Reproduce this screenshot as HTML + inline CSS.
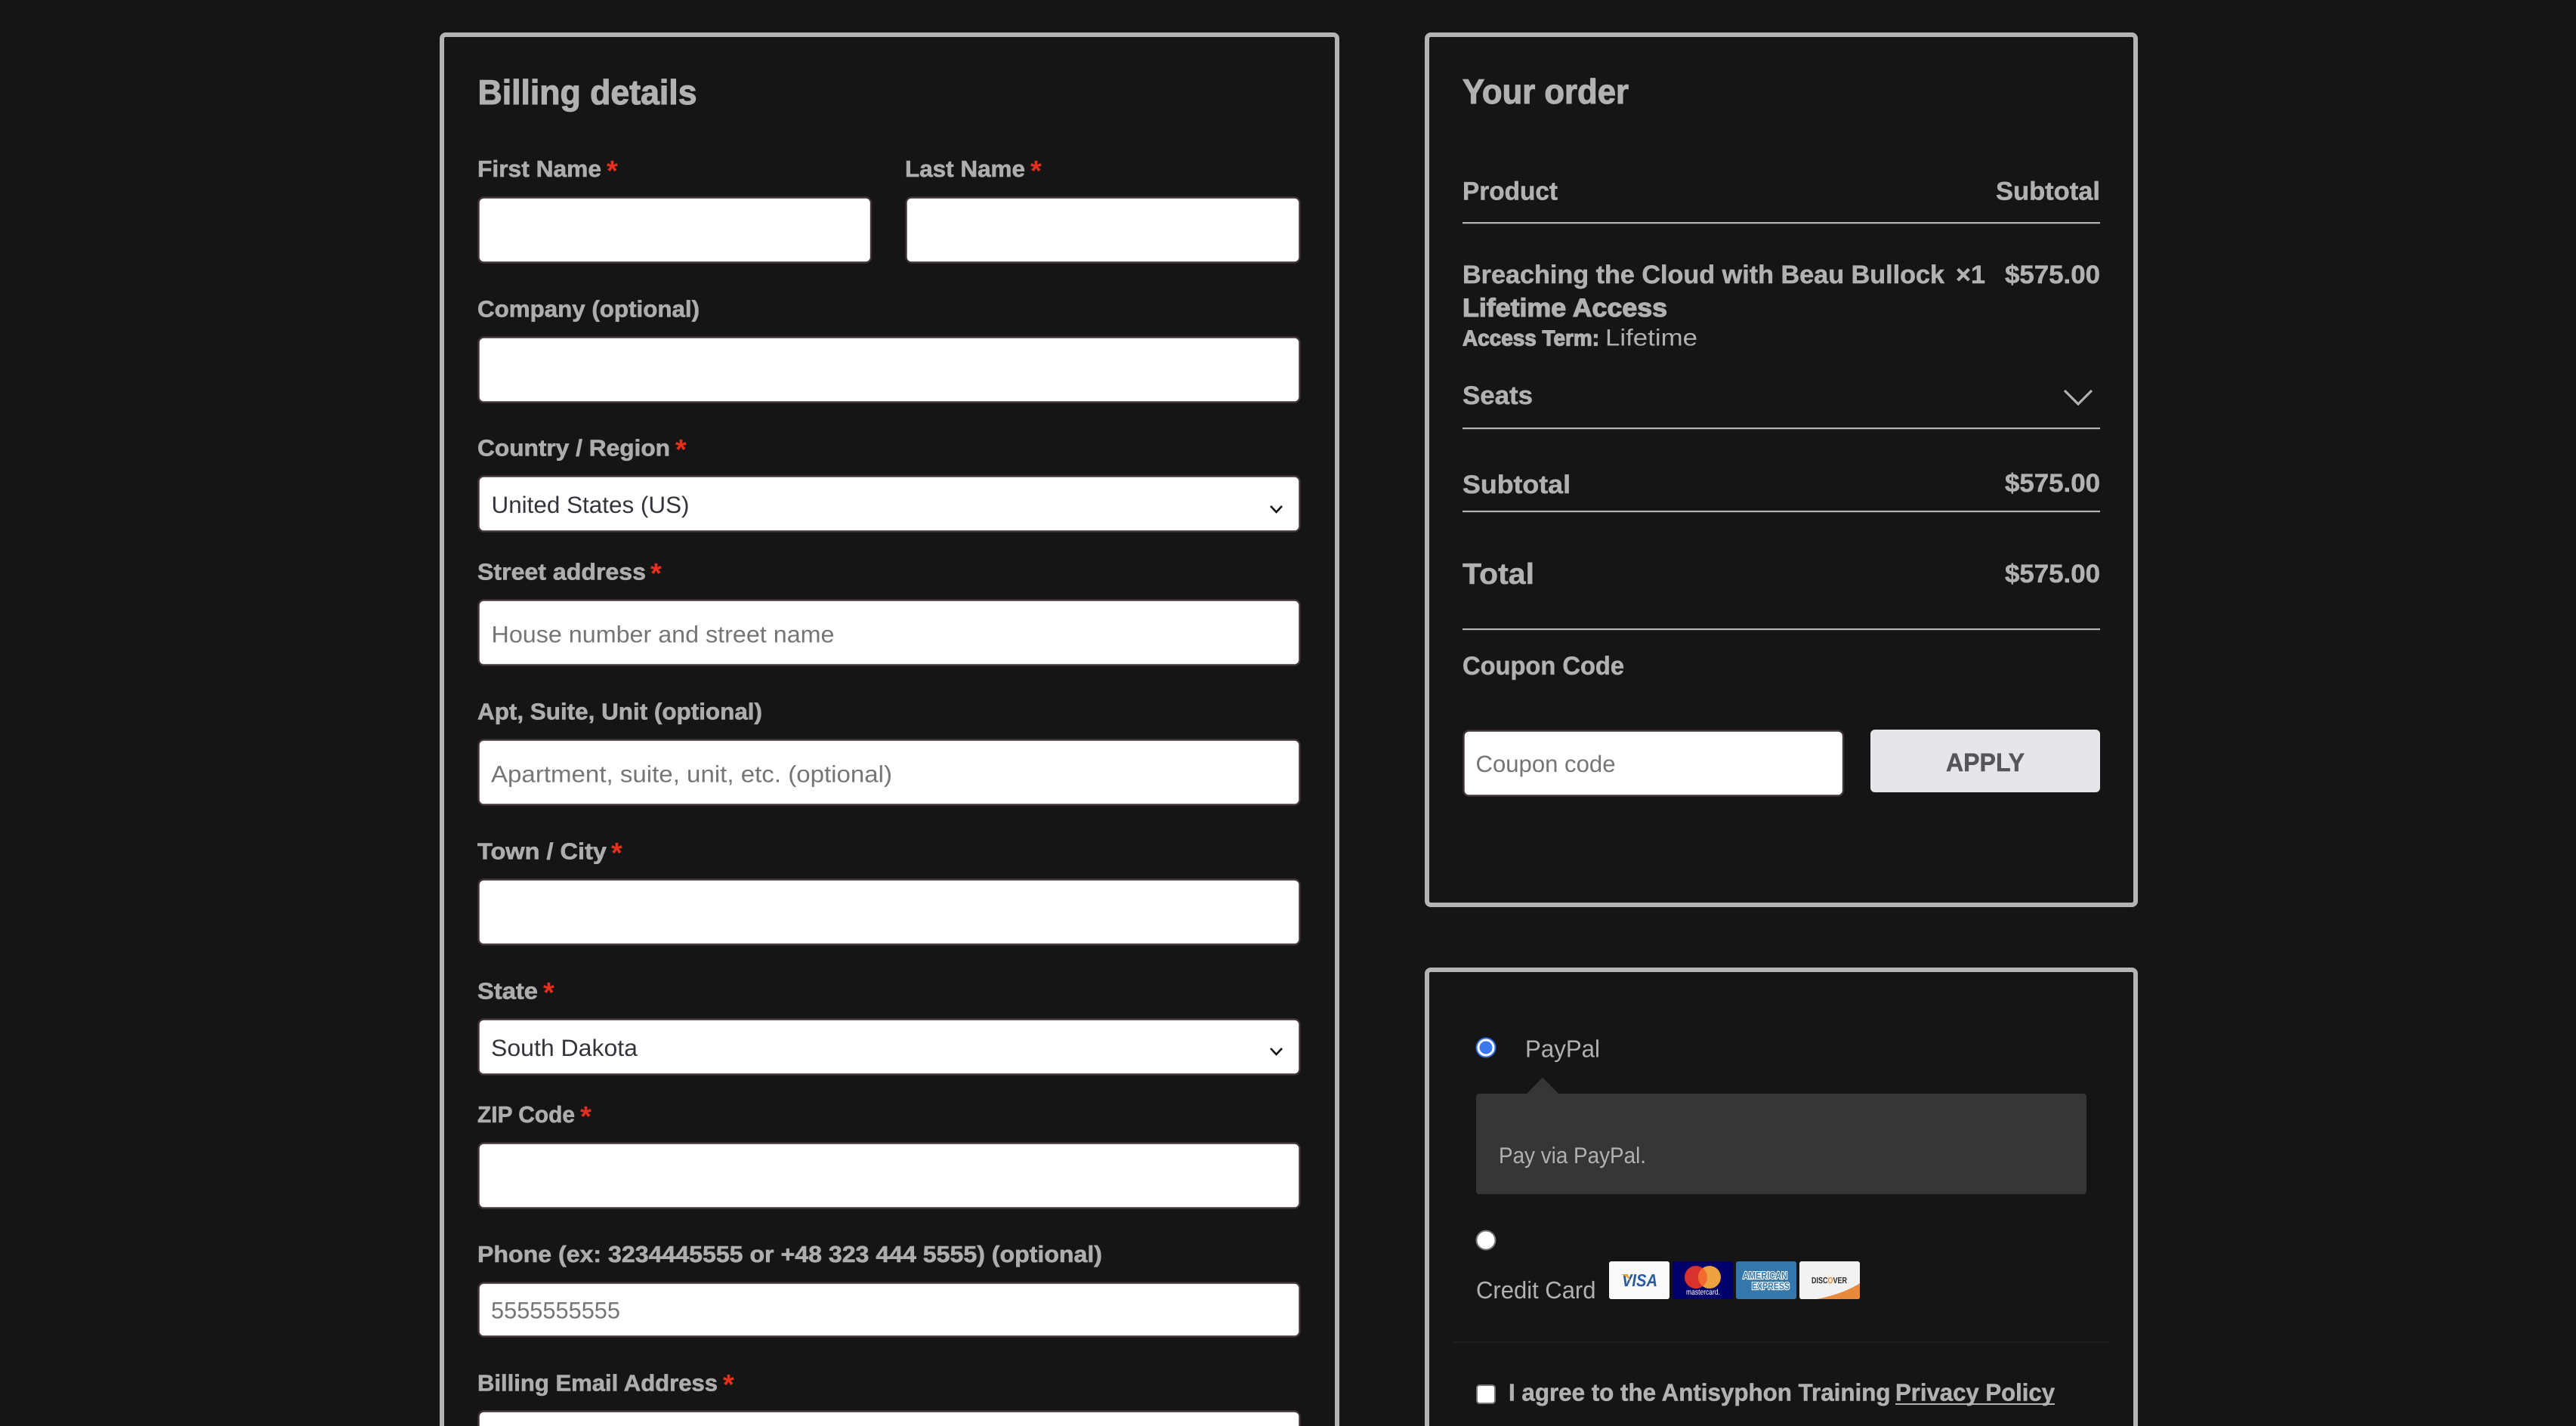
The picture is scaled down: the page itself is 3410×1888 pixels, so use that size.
<!DOCTYPE html>
<html lang="en">
<head>
<meta charset="utf-8">
<title>Checkout</title>
<style>
html,body{margin:0;padding:0;width:3410px;height:1888px;background:#151515;overflow:hidden}
svg{display:block;position:absolute;left:0;top:0}
text{font-family:"Liberation Sans",sans-serif;text-rendering:geometricPrecision;fill:#b1b1b1}
.t{font-weight:700;font-size:46px;stroke:#b1b1b1;stroke-width:1.1px}
.l{font-weight:700;font-size:30.5px;fill:#adadad;stroke:#adadad;stroke-width:.6px}
.b{font-weight:700;font-size:34px;stroke:#b1b1b1;stroke-width:.5px}
.n{font-size:32px}
.p{font-size:31px;fill:#757575}
.s{font-size:31px;fill:#33343a}
.a{font-weight:700;font-size:38px;fill:#e8301c}
.x{stroke:#b1b1b1;stroke-width:1.2px}
.card{fill:none;stroke:#b4b4b4;stroke-width:6}
.in{fill:#fff;stroke:#40363a;stroke-width:2.4}
</style>
</head>
<body>
<svg width="3410" height="1888" viewBox="0 0 3410 1888" xmlns="http://www.w3.org/2000/svg">
<rect width="3410" height="1888" fill="#151515"/>

<!-- Billing card -->
<path class="card" d="M585 1888 V51 a5 5 0 0 1 5 -5 H1765 a5 5 0 0 1 5 5 V1888"/>
<text class="t" x="632.5" y="138" textLength="290" lengthAdjust="spacingAndGlyphs">Billing details</text>

<text class="l" x="632" y="234" textLength="164" lengthAdjust="spacingAndGlyphs">First Name</text>
<text class="a" x="803" y="239">*</text>
<rect class="in" x="633.5" y="261.5" width="519.5" height="86" rx="7"/>

<text class="l" x="1198" y="234" textLength="159" lengthAdjust="spacingAndGlyphs">Last Name</text>
<text class="a" x="1364" y="239">*</text>
<rect class="in" x="1199.5" y="261.5" width="521" height="86" rx="7"/>

<text class="l" x="632" y="419.5" textLength="294" lengthAdjust="spacingAndGlyphs">Company (optional)</text>
<rect class="in" x="633.5" y="446.5" width="1087" height="86" rx="7"/>

<text class="l" x="632" y="603.5" textLength="255" lengthAdjust="spacingAndGlyphs">Country / Region</text>
<text class="a" x="894" y="608">*</text>
<rect class="in" x="633.5" y="630.5" width="1087" height="73" rx="7"/>
<text class="s" x="650.5" y="679" textLength="262" lengthAdjust="spacingAndGlyphs">United States (US)</text>
<path d="M1682 670 L1689.5 678 L1697 670" fill="none" stroke="#111" stroke-width="2.6"/>

<text class="l" x="632" y="767.5" textLength="223" lengthAdjust="spacingAndGlyphs">Street address</text>
<text class="a" x="861" y="772">*</text>
<rect class="in" x="633.5" y="794.5" width="1087" height="86" rx="7"/>
<text class="p" x="650.5" y="850.5" textLength="454" lengthAdjust="spacingAndGlyphs">House number and street name</text>

<text class="l" x="632" y="952.5" textLength="377" lengthAdjust="spacingAndGlyphs">Apt, Suite, Unit (optional)</text>
<rect class="in" x="633.5" y="979.5" width="1087" height="86" rx="7"/>
<text class="p" x="650" y="1035.5" textLength="531" lengthAdjust="spacingAndGlyphs">Apartment, suite, unit, etc. (optional)</text>

<text class="l" x="632" y="1137.5" textLength="171" lengthAdjust="spacingAndGlyphs">Town / City</text>
<text class="a" x="809" y="1142">*</text>
<rect class="in" x="633.5" y="1164.5" width="1087" height="86" rx="7"/>

<text class="l" x="632" y="1322.5" textLength="80" lengthAdjust="spacingAndGlyphs">State</text>
<text class="a" x="719" y="1327">*</text>
<rect class="in" x="633.5" y="1349.5" width="1087" height="73" rx="7"/>
<text class="s" x="650" y="1398" textLength="194" lengthAdjust="spacingAndGlyphs">South Dakota</text>
<path d="M1682 1388 L1689.5 1396 L1697 1388" fill="none" stroke="#111" stroke-width="2.6"/>

<text class="l" x="632" y="1486" textLength="129" lengthAdjust="spacingAndGlyphs">ZIP Code</text>
<text class="a" x="768" y="1491">*</text>
<rect class="in" x="633.5" y="1513.5" width="1087" height="86" rx="7"/>

<text class="l" x="632" y="1671" textLength="827" lengthAdjust="spacingAndGlyphs">Phone (ex: 3234445555 or +48 323 444 5555) (optional)</text>
<rect class="in" x="633.5" y="1698.5" width="1087" height="71" rx="7"/>
<text class="p" x="650" y="1745.5" textLength="171" lengthAdjust="spacingAndGlyphs">5555555555</text>

<text class="l" x="632" y="1841.5" textLength="318" lengthAdjust="spacingAndGlyphs">Billing Email Address</text>
<text class="a" x="957" y="1846">*</text>
<path class="in" d="M633.5 1888 V1875.5 a7 7 0 0 1 7 -7 H1713.5 a7 7 0 0 1 7 7 V1888"/>

<!-- Order card -->
<rect class="card" x="1889" y="46" width="938" height="1152" rx="5"/>
<text class="t" x="1936" y="137" textLength="220" lengthAdjust="spacingAndGlyphs">Your order</text>
<text class="b" x="1936" y="264.5" textLength="126" lengthAdjust="spacingAndGlyphs">Product</text>
<text class="b" x="2642" y="264.5" textLength="138" lengthAdjust="spacingAndGlyphs">Subtotal</text>
<rect x="1936" y="294" width="844" height="2.2" fill="#b4b4b4"/>

<text class="b" x="1936" y="375" textLength="638" lengthAdjust="spacingAndGlyphs">Breaching the Cloud with Beau Bullock</text>
<text class="b" x="2589" y="375" textLength="39" lengthAdjust="spacingAndGlyphs">×1</text>
<text class="b" x="2654" y="375" textLength="126" lengthAdjust="spacingAndGlyphs">$575.00</text>
<text class="b x" x="1936" y="419" textLength="271" lengthAdjust="spacingAndGlyphs">Lifetime Access</text>
<text class="x" font-weight="700" font-size="29" x="1936" y="457.5" textLength="181" lengthAdjust="spacingAndGlyphs">Access Term:</text>
<text font-size="31" x="2125" y="457.5" textLength="122" lengthAdjust="spacingAndGlyphs">Lifetime</text>

<text class="b" x="1936" y="535" textLength="93" lengthAdjust="spacingAndGlyphs">Seats</text>
<path d="M2733 517 L2751 535 L2769 517" fill="none" stroke="#b1b1b1" stroke-width="3.2"/>
<rect x="1936" y="566" width="844" height="2.2" fill="#b4b4b4"/>

<text class="b" x="1936" y="653" textLength="143" lengthAdjust="spacingAndGlyphs">Subtotal</text>
<text class="b" x="2654" y="651" textLength="126" lengthAdjust="spacingAndGlyphs">$575.00</text>
<rect x="1936" y="676" width="844" height="2.2" fill="#b4b4b4"/>

<text class="b" style="font-size:39px" x="1936" y="773" textLength="95" lengthAdjust="spacingAndGlyphs">Total</text>
<text class="b" x="2654" y="771" textLength="126" lengthAdjust="spacingAndGlyphs">$575.00</text>
<rect x="1936" y="832" width="844" height="2.2" fill="#b4b4b4"/>

<text class="b" x="1936" y="893" textLength="214" lengthAdjust="spacingAndGlyphs">Coupon Code</text>
<rect class="in" x="1937.5" y="967.5" width="502.5" height="86" rx="7"/>
<text class="p" x="1953.5" y="1022" textLength="185" lengthAdjust="spacingAndGlyphs">Coupon code</text>
<rect x="2476" y="966" width="304" height="83" rx="6" fill="#e6e6ea"/>
<text class="b" style="fill:#55565a;stroke:#55565a" x="2576" y="1021" textLength="104" lengthAdjust="spacingAndGlyphs">APPLY</text>

<!-- Payment card -->
<path class="card" d="M1889 1888 V1289 a5 5 0 0 1 5 -5 H2822 a5 5 0 0 1 5 5 V1888"/>
<circle cx="1967" cy="1387" r="12.5" fill="#fff" stroke="#2f6fe8" stroke-width="2"/>
<circle cx="1967" cy="1387" r="8.5" fill="#3b78f0"/>
<text class="n" x="2019" y="1399.5" textLength="99" lengthAdjust="spacingAndGlyphs">PayPal</text>
<path d="M2020 1449 L2042 1426.5 L2064 1449 Z" fill="#363636"/>
<rect x="1954" y="1448" width="808" height="133" rx="4" fill="#363636"/>
<text font-size="30" x="1984" y="1540" textLength="195" lengthAdjust="spacingAndGlyphs">Pay via PayPal.</text>

<circle cx="1967" cy="1642" r="12.5" fill="#fff" stroke="#767676" stroke-width="2"/>
<text class="n" x="1954" y="1719" textLength="158.5" lengthAdjust="spacingAndGlyphs">Credit Card</text>

<!-- Visa -->
<rect x="2130" y="1670" width="80" height="50" rx="3" fill="#f9f9fa"/>
<text font-weight="700" font-style="italic" font-size="23" style="fill:#2a5a9e" x="2147" y="1703" textLength="47" lengthAdjust="spacingAndGlyphs">VISA</text>
<path d="M2146 1687 L2155 1687 L2158 1696 Q2154 1690 2146 1687 Z" fill="#e4a83a"/>
<!-- Mastercard -->
<rect x="2214" y="1670" width="80" height="50" rx="3" fill="#00006a"/>
<circle cx="2245" cy="1691" r="15" fill="#d9322e"/>
<circle cx="2263" cy="1691" r="15" fill="#eda140"/>
<path d="M2254 1679 A15 15 0 0 1 2254 1703 A15 15 0 0 1 2254 1679 Z" fill="#f26a2e"/>
<text font-size="10.5" style="fill:#fff" x="2232" y="1714" textLength="45" lengthAdjust="spacingAndGlyphs">mastercard.</text>
<!-- Amex -->
<rect x="2298" y="1670" width="80" height="50" rx="3" fill="#3577ab"/>
<text font-weight="700" font-size="13" style="fill:#3577ab;stroke:#fff;stroke-width:2.2px;paint-order:stroke" x="2307" y="1693" textLength="59" lengthAdjust="spacingAndGlyphs">AMERICAN</text>
<text font-weight="700" font-size="13" style="fill:#3577ab;stroke:#fff;stroke-width:2.2px;paint-order:stroke" x="2319" y="1707" textLength="50" lengthAdjust="spacingAndGlyphs">EXPRESS</text>
<!-- Discover -->
<rect x="2382" y="1670" width="80" height="50" rx="3" fill="#f2f2f2"/>
<path d="M2405 1720 Q2440 1713 2462 1699 L2462 1717 Q2462 1720 2459 1720 Z" fill="#e88a3a"/>
<text font-weight="700" font-size="11.5" style="fill:#2a2a2a" x="2398" y="1699" textLength="47" lengthAdjust="spacingAndGlyphs">DISC<tspan style="fill:#e88a3a">O</tspan>VER</text>

<rect x="1923" y="1776" width="871" height="1.5" fill="#1e1e1e"/>
<rect x="1955" y="1834" width="24" height="24" rx="3.5" fill="#fff" stroke="#767676" stroke-width="2"/>
<text class="b" style="font-size:32px" x="1997" y="1854.5" textLength="505.5" lengthAdjust="spacingAndGlyphs">I agree to the Antisyphon Training</text>
<text class="b" style="font-size:32px" x="2509" y="1854.5" textLength="211" lengthAdjust="spacingAndGlyphs">Privacy Policy</text>
<rect x="2509" y="1858" width="211" height="2" fill="#b1b1b1"/>
</svg>
</body>
</html>
